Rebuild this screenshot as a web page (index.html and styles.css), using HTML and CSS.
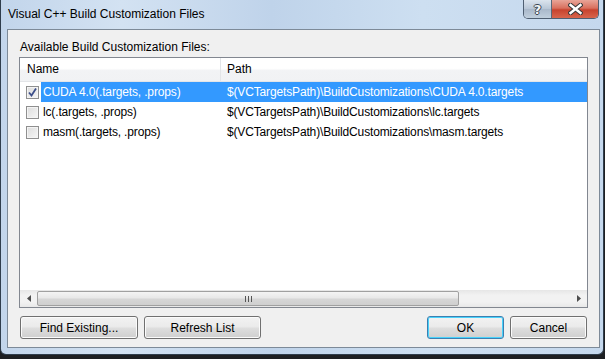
FILE: index.html
```html
<!DOCTYPE html>
<html lang="en">
<head>
    <meta charset="UTF-8">
    <title>Visual C++ Build Customization Files</title>
    <link rel="stylesheet" href="styles.css">
</head>
<body>
    <div class="window">
        <div class="titlebar">
            <span class="title">Visual C++ Build Customization Files</span>
            <div class="caption-buttons">
                <div class="cap-btn help">?</div>
                <div class="cap-btn close">
                    <svg width="15" height="12" viewBox="0 0 15 12">
                        <path d="M2.5 2 L12.5 10 M12.5 2 L2.5 10" stroke="#3b3b3b" stroke-width="4.5" stroke-linecap="square"/>
                        <path d="M2.5 2 L12.5 10 M12.5 2 L2.5 10" stroke="#ffffff" stroke-width="2.4" stroke-linecap="square"/>
                    </svg>
                </div>
            </div>
        </div>

        <div class="panel">
            <div class="label">Available Build Customization Files:</div>

            <div class="listbox">
                <div class="list-header">
                    <div class="head-name">Name</div>
                    <div class="head-path">Path</div>
                </div>

                <div class="rows">
                    <div class="row">
                        <span class="check checked">
                            <svg width="9" height="9" viewBox="0 0 9 9"><path d="M1 4.5 L3.5 7.5 L8 0.5" fill="none" stroke="#3d4f8a" stroke-width="1.8"/></svg>
                        </span>
                        <div class="row-body selected">
                            <span class="cell-name">CUDA 4.0(.targets, .props)</span>
                            <span class="cell-path">$(VCTargetsPath)\BuildCustomizations\CUDA 4.0.targets</span>
                        </div>
                    </div>
                    <div class="row">
                        <span class="check"></span>
                        <div class="row-body">
                            <span class="cell-name">lc(.targets, .props)</span>
                            <span class="cell-path">$(VCTargetsPath)\BuildCustomizations\lc.targets</span>
                        </div>
                    </div>
                    <div class="row">
                        <span class="check"></span>
                        <div class="row-body">
                            <span class="cell-name">masm(.targets, .props)</span>
                            <span class="cell-path">$(VCTargetsPath)\BuildCustomizations\masm.targets</span>
                        </div>
                    </div>
                </div>

                <div class="hscroll">
                    <div class="arrow"><svg width="4" height="7" viewBox="0 0 4 7"><path d="M4 0 L0 3.5 L4 7 Z" fill="#4d4d4d"/></svg></div>
                    <div class="track">
                        <div class="thumb"><span class="grip"></span></div>
                    </div>
                    <div class="arrow"><svg width="4" height="7" viewBox="0 0 4 7"><path d="M0 0 L4 3.5 L0 7 Z" fill="#4d4d4d"/></svg></div>
                </div>
            </div>

            <div class="buttons">
                <button class="btn btn-wide">Find Existing...</button>
                <button class="btn btn-refresh">Refresh List</button>
                <span class="spacer"></span>
                <button class="btn btn-default">OK</button>
                <button class="btn">Cancel</button>
            </div>
        </div>
    </div>
</body>
</html>
```

FILE: styles.css
```css
html, body {
    margin: 0;
    padding: 0;
}

body {
    background-color: #1d1f22;
    font-family: "Liberation Sans", Arial, sans-serif;
    font-size: 12px;
    color: #000;
    height: 359px;
    overflow: hidden;
}

.window {
    width: 593px;
    height: 348px;
    padding: 0 3px 6px 6px;
    border: 1px solid #2f3d4c;
    border-top: none;
    border-radius: 0 0 6px 6px;
    background: linear-gradient(90deg, #c2d5eb 0%, #d3e2f2 20%, #bfd3ea 45%, #cddff1 70%, #c5d8ed 100%);
    display: flex;
    flex-direction: column;
}

/* title bar */
.titlebar {
    height: 29px;
    display: flex;
    align-items: flex-start;
    flex-shrink: 0;
}

.title {
    margin: 7px 0 0 1px;
    line-height: 15px;
    color: #000;
}

.caption-buttons {
    margin-left: auto;
    margin-right: 1px;
    display: flex;
    height: 18px;
    border: 1px solid #4f5f72;
    border-top: none;
    border-radius: 0 0 5px 5px;
    overflow: hidden;
}

.cap-btn {
    display: flex;
    align-items: center;
    justify-content: center;
}

.help {
    width: 27px;
    background: linear-gradient(#dbe4ee, #b8c6d6 50%, #a9b8ca 51%, #c0cfdd);
    border-right: 1px solid #5a6878;
    font-family: "DejaVu Sans", sans-serif;
    font-weight: bold;
    font-size: 13px;
    color: #f4f6f8;
    text-shadow: 1px 0 0 #3a4450, -1px 0 0 #3a4450, 0 1px 0 #3a4450, 0 -1px 0 #3a4450;
}

.close {
    width: 46px;
    background: linear-gradient(#e8a598, #d9705e 45%, #c7432e 55%, #d8654c);
}

/* client area */
.panel {
    flex: 1;
    background-color: #f0f0f0;
    border: 1px solid #7d8a98;
    padding: 10px 11px 8px;
    display: flex;
    flex-direction: column;
}

.label {
    line-height: 15px;
    margin-bottom: 2px;
    padding-left: 1px;
}

.listbox {
    height: 249px;
    border: 1px solid #828790;
    background-color: #fff;
    display: flex;
    flex-direction: column;
}

.list-header {
    height: 23px;
    display: flex;
    border-bottom: 1px solid #e3e5e8;
    background: linear-gradient(#ffffff 0%, #ffffff 45%, #f2f3f5 55%, #f1f2f4 100%);
    line-height: 23px;
}

.head-name {
    width: 193px;
    padding-left: 7px;
    border-right: 1px solid #e3e5e8;
}

.head-path {
    padding-left: 6px;
}

.rows {
    flex: 1;
    letter-spacing: -0.15px;
}

.row {
    height: 20px;
    display: flex;
    align-items: center;
    padding-left: 6px;
}

.check {
    width: 11px;
    height: 11px;
    border: 1px solid #8f8f8f;
    background: linear-gradient(135deg, #dcdcdc, #f6f6f6);
    box-shadow: inset 0 0 0 1px #f4f4f4;
    margin-right: 2px;
    display: flex;
    align-items: center;
    justify-content: center;
}

.row-body {
    flex: 1;
    height: 20px;
    line-height: 20px;
    display: flex;
}

.row-body.selected {
    background-color: #3399ff;
    color: #fff;
}

.cell-name {
    width: 178px;
    padding-left: 2px;
    white-space: nowrap;
}

.cell-path {
    padding-left: 6px;
    white-space: nowrap;
}

/* horizontal scrollbar */
.hscroll {
    height: 17px;
    display: flex;
    background: linear-gradient(#e6e6e6, #f2f2f2 30%, #f2f2f2 70%, #e8e8e8);
}

.arrow {
    width: 17px;
    display: flex;
    align-items: center;
    justify-content: center;
}

.track {
    flex: 1;
    display: flex;
    align-items: center;
}

.thumb {
    width: 422px;
    height: 15px;
    border: 1px solid #a0a0a0;
    border-radius: 2px;
    box-sizing: border-box;
    background: linear-gradient(#f4f4f4, #e8e8e8 45%, #d6d6d6 55%, #cfcfcf);
    display: flex;
    align-items: center;
    justify-content: center;
}

.grip {
    width: 5px;
    height: 6px;
    border-left: 1px solid #555;
    border-right: 1px solid #555;
    background: linear-gradient(90deg, transparent 2px, #555 2px, #555 3px, transparent 3px);
}

/* buttons */
.buttons {
    margin-top: 8px;
    display: flex;
    gap: 6px;
    padding: 0 1px;
}

.spacer {
    flex: 1;
}

.btn {
    width: 77px;
    height: 23px;
    padding: 0;
    font-family: "Liberation Sans", Arial, sans-serif;
    font-size: 12px;
    color: #000;
    border: 1px solid #707070;
    border-radius: 3px;
    background: linear-gradient(#f2f2f2, #ebebeb 45%, #dddddd 55%, #cfcfcf);
    box-shadow: inset 0 0 0 1px #fbfbfb;
}

.btn-wide {
    width: 118px;
}

.btn-refresh {
    width: 117px;
}

.btn-default {
    border-color: #3c7fb1;
    box-shadow: inset 0 0 0 1px #48d2fb;
}
```
